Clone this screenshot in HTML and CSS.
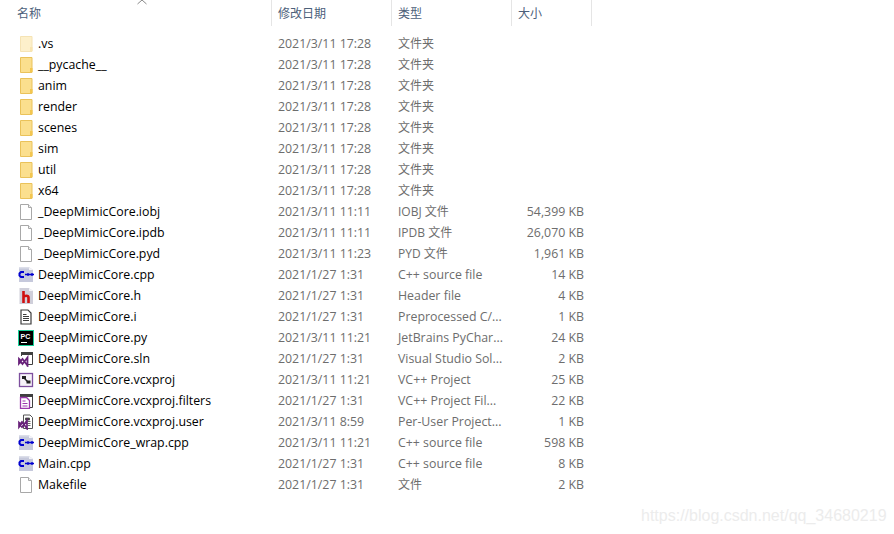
FILE: index.html
```html
<!DOCTYPE html>
<html lang="zh">
<head>
<meta charset="utf-8">
<title>DeepMimicCore</title>
<link rel="stylesheet" href="styles.css">
</head>
<body>
<svg class="defs" width="0" height="0">
  <symbol id="folder" viewBox="0 0 16 16">
    <path d="M2.500 .5h11.500v15h-11.500z" fill="#fbdf8e" stroke="#eac25a"/>
    <rect x="12" y="11" width="2.500" height="4" fill="#f3c64f"/>
  </symbol>
  <symbol id="file" viewBox="0 0 16 16">
    <path d="M2.500 .5h8l3 3v12h-11z" fill="#fff" stroke="#a8a8a8"/>
    <path d="M10.500 .5v3h3" fill="#f2f2f2" stroke="#a8a8a8"/>
  </symbol>
  <symbol id="cpp" viewBox="0 0 16 16">
    <path d="M1 0h10l4 3v12H1z" fill="#c6c9dc"/>
    <path d="M11 0l4 3h-4z" fill="#f4f4f8"/>
    <path d="M1 0h10v1.500H1z" fill="#dcdee9"/>
    <path d="M6 5H3L1.500 6.500v2L3 10h3" fill="none" stroke="#0000d0" stroke-width="2"/>
    <path d="M7 7.500h9M10 6v3M14 6v3" stroke="#0000d0" stroke-width="1.300"/>
  </symbol>
  <symbol id="h" viewBox="0 0 16 16">
    <path d="M1.500 0h9.500l4 3v13H1.500z" fill="#cfcfda"/>
    <path d="M11 0l4 3h-4z" fill="#f4f4f8"/>
    <path d="M5.500 3v12M5.500 9c1-1.500 5-2 5 .5V15" fill="none" stroke="#d01010" stroke-width="2.600"/>
  </symbol>
  <symbol id="doc" viewBox="0 0 16 16">
    <path d="M3 1h7l3 3v11H3z" fill="#fff" stroke="#3c3c3c" stroke-width="1.200"/>
    <path d="M5 5.500h3.500M5 7.500h6M5 9.500h6M5 11.500h6" stroke="#3c3c3c"/>
  </symbol>
  <symbol id="sln" viewBox="0 0 16 16">
    <path d="M3 1h12v3H3z" fill="#3f3f3f"/>
    <path d="M3.500 2v3M14.500 3v10.500H9" fill="none" stroke="#3f3f3f"/>
    <path d="M1 8l2 2-2 2.500zM9.500 6.500l-5 6.500-2-2.500 2-2.500 5 6.500zM9.500 6.500v9" fill="#fff" stroke="#68217a" stroke-width="1.800"/>
  </symbol>
  <symbol id="proj" viewBox="0 0 16 16">
    <rect x="1.500" y="1.500" width="13" height="13" fill="#f6f2f8" stroke="#7d4f9e" stroke-width="1.300"/>
    <path d="M4 4h4v3H4zM8.500 8.500h4v3h-4z" fill="#222"/>
    <path d="M6 6l4 4" stroke="#222" stroke-width="1.500"/>
  </symbol>
  <symbol id="filters" viewBox="0 0 16 16">
    <path d="M2 1h13v3H2z" fill="#3f3f3f"/>
    <path d="M14.500 3v11.500H11" fill="none" stroke="#3f3f3f"/>
    <path d="M2.500 4.500h6l3 3v8h-9z" fill="#fff" stroke="#9b37ad" stroke-width="1.300"/>
    <path d="M4.500 8h3M4.500 10.500h5M4.500 13h5" stroke="#9b37ad" stroke-width="1.200"/>
  </symbol>
  <symbol id="user" viewBox="0 0 16 16">
    <path d="M5.500 1h6.500l2.500 2.500v11h-9z" fill="#fff" stroke="#555"/>
    <path d="M7.500 4h4v2h-4zM9.500 7.500h3M9.500 9.500h3M10 11.500h2.500" fill="#444" stroke="#444" stroke-width=".8"/>
    <path d="M1 8.500l2 2-2 2.500zM9 6.500l-5 6.500-2-2.500 2-2.500 5 6.500zM9 6.500v9" fill="#fff" stroke="#68217a" stroke-width="1.700"/>
  </symbol>
</svg>

<main class="explorer">
  <header class="head">
    <div class="hcell hname">名称<svg class="caret" width="10" height="6" viewBox="0 0 10 6"><path d="M.5 5L5 1l4.500 4" fill="none" stroke="#8a8a8a"/></svg></div>
    <div class="hcell hdate">修改日期</div>
    <div class="hcell htype">类型</div>
    <div class="hcell hsize">大小</div>
  </header>
  <ul class="rows">
    <li class="row"><svg class="ico faded"><use href="#folder"/></svg><span class="name">.vs</span><span class="date">2021/3/11 17:28</span><span class="type cjk">文件夹</span><span class="size"></span></li>
    <li class="row"><svg class="ico"><use href="#folder"/></svg><span class="name">__pycache__</span><span class="date">2021/3/11 17:28</span><span class="type cjk">文件夹</span><span class="size"></span></li>
    <li class="row"><svg class="ico"><use href="#folder"/></svg><span class="name">anim</span><span class="date">2021/3/11 17:28</span><span class="type cjk">文件夹</span><span class="size"></span></li>
    <li class="row"><svg class="ico"><use href="#folder"/></svg><span class="name">render</span><span class="date">2021/3/11 17:28</span><span class="type cjk">文件夹</span><span class="size"></span></li>
    <li class="row"><svg class="ico"><use href="#folder"/></svg><span class="name">scenes</span><span class="date">2021/3/11 17:28</span><span class="type cjk">文件夹</span><span class="size"></span></li>
    <li class="row"><svg class="ico"><use href="#folder"/></svg><span class="name">sim</span><span class="date">2021/3/11 17:28</span><span class="type cjk">文件夹</span><span class="size"></span></li>
    <li class="row"><svg class="ico"><use href="#folder"/></svg><span class="name">util</span><span class="date">2021/3/11 17:28</span><span class="type cjk">文件夹</span><span class="size"></span></li>
    <li class="row"><svg class="ico"><use href="#folder"/></svg><span class="name">x64</span><span class="date">2021/3/11 17:28</span><span class="type cjk">文件夹</span><span class="size"></span></li>
    <li class="row"><svg class="ico"><use href="#file"/></svg><span class="name">_DeepMimicCore.iobj</span><span class="date">2021/3/11 11:11</span><span class="type cjk">IOBJ 文件</span><span class="size">54,399 KB</span></li>
    <li class="row"><svg class="ico"><use href="#file"/></svg><span class="name">_DeepMimicCore.ipdb</span><span class="date">2021/3/11 11:11</span><span class="type cjk">IPDB 文件</span><span class="size">26,070 KB</span></li>
    <li class="row"><svg class="ico"><use href="#file"/></svg><span class="name">_DeepMimicCore.pyd</span><span class="date">2021/3/11 11:23</span><span class="type cjk">PYD 文件</span><span class="size">1,961 KB</span></li>
    <li class="row"><svg class="ico"><use href="#cpp"/></svg><span class="name">DeepMimicCore.cpp</span><span class="date">2021/1/27 1:31</span><span class="type">C++ source file</span><span class="size">14 KB</span></li>
    <li class="row"><svg class="ico"><use href="#h"/></svg><span class="name">DeepMimicCore.h</span><span class="date">2021/1/27 1:31</span><span class="type">Header file</span><span class="size">4 KB</span></li>
    <li class="row"><svg class="ico"><use href="#doc"/></svg><span class="name">DeepMimicCore.i</span><span class="date">2021/1/27 1:31</span><span class="type">Preprocessed C/...</span><span class="size">1 KB</span></li>
    <li class="row"><svg class="ico" viewBox="0 0 16 16"><rect x=".5" y=".5" width="15" height="15" fill="#000" stroke="#19d29a"/><text class="pc-text" x="2.500" y="8.500">PC</text><rect x="3" y="12" width="6" height="1" fill="#fff"/></svg><span class="name">DeepMimicCore.py</span><span class="date">2021/3/11 11:21</span><span class="type">JetBrains PyChar...</span><span class="size">24 KB</span></li>
    <li class="row"><svg class="ico"><use href="#sln"/></svg><span class="name">DeepMimicCore.sln</span><span class="date">2021/1/27 1:31</span><span class="type">Visual Studio Sol...</span><span class="size">2 KB</span></li>
    <li class="row"><svg class="ico"><use href="#proj"/></svg><span class="name">DeepMimicCore.vcxproj</span><span class="date">2021/3/11 11:21</span><span class="type">VC++ Project</span><span class="size">25 KB</span></li>
    <li class="row"><svg class="ico"><use href="#filters"/></svg><span class="name">DeepMimicCore.vcxproj.filters</span><span class="date">2021/1/27 1:31</span><span class="type">VC++ Project Fil...</span><span class="size">22 KB</span></li>
    <li class="row"><svg class="ico"><use href="#user"/></svg><span class="name">DeepMimicCore.vcxproj.user</span><span class="date">2021/3/11 8:59</span><span class="type">Per-User Project...</span><span class="size">1 KB</span></li>
    <li class="row"><svg class="ico"><use href="#cpp"/></svg><span class="name">DeepMimicCore_wrap.cpp</span><span class="date">2021/3/11 11:21</span><span class="type">C++ source file</span><span class="size">598 KB</span></li>
    <li class="row"><svg class="ico"><use href="#cpp"/></svg><span class="name">Main.cpp</span><span class="date">2021/1/27 1:31</span><span class="type">C++ source file</span><span class="size">8 KB</span></li>
    <li class="row"><svg class="ico"><use href="#file"/></svg><span class="name">Makefile</span><span class="date">2021/1/27 1:31</span><span class="type cjk">文件</span><span class="size">2 KB</span></li>
  </ul>
  <div class="watermark">https://blog.csdn.net/qq_34680219</div>
</main>
</body>
</html>
```
FILE: styles.css
```css
* { box-sizing: border-box; }
html, body { margin: 0; padding: 0; background: #fff; }
body {
  width: 894px;
  height: 534px;
  overflow: hidden;
  font-family: "Open Sans", "Noto Sans CJK SC", sans-serif;
  font-size: 12.35px;
  color: #000;
}
.defs { position: absolute; }
.pc-text { font: bold 7px "Liberation Sans", sans-serif; fill: #fff; }
.explorer { position: relative; width: 894px; height: 534px; }
.head {
  display: grid;
  grid-template-columns: 272px 120px 120px 80px;
  height: 26px;
}
.hcell {
  position: relative;
  padding-left: 6px;
  line-height: 26px;
  color: #4c607a;
  border-right: 1px solid #e5e5e5;
  font-family: "Noto Sans CJK SC", sans-serif;
  font-size: 12px;
}
.hname { padding-left: 17px; }
.caret { position: absolute; left: 137px; top: -1px; }
.rows { list-style: none; margin: 7px 0 0; padding: 0; }
.row {
  display: grid;
  grid-template-columns: 19px 240px 120px 120px 66px;
  align-items: center;
  height: 21px;
  padding-left: 19px;
  white-space: nowrap;
}
.ico { width: 16px; height: 16px; margin-left: -1px; }
.faded { opacity: .45; }
.date, .type, .size { color: #6d6d6d; }
.cjk { font-size: 12px; margin-bottom: 2px; }
.size { text-align: right; }
.watermark {
  position: absolute;
  left: 641px;
  top: 505px;
  font-family: "Liberation Sans", sans-serif;
  font-size: 16px;
  line-height: 22px;
  color: #ececec;
  white-space: nowrap;
}
```
